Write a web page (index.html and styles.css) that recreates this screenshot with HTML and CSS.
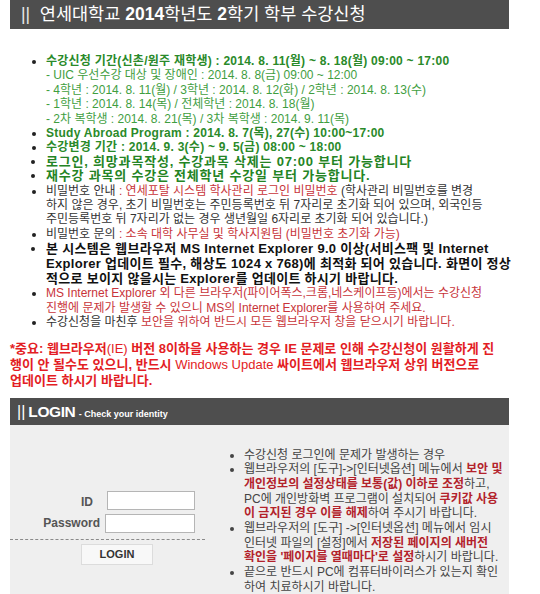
FILE: index.html
```html
<!DOCTYPE html>
<html lang="ko">
<head>
<meta charset="utf-8">
<title>연세대학교 수강신청</title>
<link rel="stylesheet" href="styles.css">
</head>
<body>
<div class="page">
  <div class="title-bar"><span class="bars">||</span> &nbsp;연세대학교 <b>2014</b>학년도 <b>2</b>학기 학부 수강신청</div>

  <ul class="notice">
    <li class="g-b">수강신청 기간(신촌/원주 재학생) : 2014. 8. 11(월) ~ 8. 18(월) 09:00 ~ 17:00
      <div class="sub">- UIC 우선수강 대상 및 장애인 : 2014. 8. 8(금) 09:00 ~ 12:00<br>- 4학년 : 2014. 8. 11(월) / 3학년 : 2014. 8. 12(화) / 2학년 : 2014. 8. 13(수)<br>- 1학년 : 2014. 8. 14(목) / 전체학년 : 2014. 8. 18(월)<br>- 2차 복학생 : 2014. 8. 21(목) / 3차 복학생 : 2014. 9. 11(목)</div>
    </li>
    <li class="g-b">Study Abroad Program : 2014. 8. 7(목), 27(수) 10:00~17:00</li>
    <li class="g-b">수강변경 기간 : 2014. 9. 3(수) ~ 9. 5(금) 08:00 ~ 18:00</li>
    <li class="g-b big">로그인, 희망과목작성, 수강과목 삭제는 07:00 부터 가능합니다</li>
    <li class="g-b big">재수강 과목의 수강은 전체학년 수강일 부터 가능합니다.</li>
    <li class="dark">비밀번호 안내 <span class="red">: 연세포탈 시스템 학사관리 로그인 비밀번호</span> (학사관리 비밀번호를 변경<br>하지 않은 경우, 초기 비밀번호는 주민등록번호 뒤 7자리로 초기화 되어 있으며, 외국인등<br>주민등록번호 뒤 7자리가 없는 경우 생년월일 6자리로 초기화 되어 있습니다.)</li>
    <li class="dark">비밀번호 문의 <span class="red">: 소속 대학 사무실 및 학사지원팀 (비밀번호 초기화 가능)</span></li>
    <li class="black-b">본 시스템은 웹브라우저 MS Internet Explorer 9.0 이상(서비스팩 및 Internet<br>Explorer 업데이트 필수, 해상도 1024 x 768)에 최적화 되어 있습니다. 화면이 정상<br>적으로 보이지 않을시는 Explorer를 업데이트 하시기 바랍니다.</li>
    <li class="red">MS Internet Explorer 외 다른 브라우저(파이어폭스,크롬,네스케이프등)에서는 수강신청<br>진행에 문제가 발생할 수 있으니 MS의 Internet Explorer를 사용하여 주세요.</li>
    <li class="dark">수강신청을 마친후 <span class="red">보안을 위하여 반드시 모든 웹브라우저 창을 닫으시기 바랍니다.</span></li>
  </ul>

  <p class="warning">*중요: 웹브라우저<span class="thin">(IE)</span> 버전 8이하을 사용하는 경우 IE 문제로 인해 수강신청이 원활하게 진<br>행이 안 될수도 있으니, 반드시 <span class="thin">Windows Update</span> 싸이트에서 웹브라우저 상위 버전으로<br>업데이트 하시기 바랍니다.</p>

  <div class="login-bar"><span class="login-bars">||</span><span class="login-title">LOGIN</span> <span class="login-sub">- Check your identity</span></div>

  <div class="login-body">
    <div class="login-form">
      <div class="form-grid">
        <label class="lbl lbl-id" for="uid">ID</label>
        <input class="field field-id" id="uid" type="text">
        <label class="lbl" for="upw">Password</label>
        <input class="field" id="upw" type="password">
      </div>
      <div class="form-sep"></div>
      <div class="btn-row"><button class="login-btn" type="button">LOGIN</button></div>
    </div>
    <ul class="help">
      <li>수강신청 로그인에 문제가 발생하는 경우</li>
      <li>웹브라우저의 [도구]-&gt;[인터넷옵션] 메뉴에서 <b class="hl">보안 및<br>개인정보의 설정상태를 보통(값) 이하로 조정</b>하고,<br>PC에 개인방화벽 프로그램이 설치되어 <b class="hl">쿠키값 사용<br>이 금지된 경우 이를 해제</b>하여 주시기 바랍니다.</li>
      <li>웹브라우저의 [도구] -&gt;[인터넷옵션] 메뉴에서 임시<br>인터넷 파일의 [설정]에서 <b class="hl">저장된 페이지의 새버전<br>확인을 '페이지를 열때마다'로 설정</b>하시기 바랍니다.</li>
      <li>끝으로 반드시 PC에 컴퓨터바이러스가 있는지 확인<br>하여 치료하시기 바랍니다.</li>
    </ul>
  </div>
</div>
</body>
</html>
```
FILE: styles.css
```css
html, body {
  margin: 0;
  padding: 0;
  background: #ffffff;
}
body {
  font-family: "Liberation Sans", "Noto Sans CJK KR", sans-serif;
  font-size: 12px;
  color: #333;
}
.page {
  width: 499px;
  margin-left: 10px;
}
.title-bar {
  background: #4e4e4e;
  color: #fff;
  height: 29px;
  line-height: 29px;
  font-size: 17.5px;
  padding-left: 11px;
  white-space: nowrap;
}
.title-bar .bars {
  font-weight: normal;
  color: #e8e8e8;
}
.title-bar b { font-weight: bold; }

.notice {
  margin: 25px 0 0 0;
  padding: 0 0 0 36px;
  list-style: disc;
  line-height: 14.4px;
  white-space: nowrap;
}
.notice li { margin: 0; }
.notice li::marker { color: #222; }
.g-b {
  color: #2a8a2a;
  font-weight: bold;
  letter-spacing: 0.25px;
}
.g-b.big {
  font-size: 13px;
  letter-spacing: 0.8px;
  color: #248424;
}
.sub {
  color: #3f9e3f;
  font-weight: normal;
  font-size: 12px;
  letter-spacing: 0;
}
.dark { color: #333; }
.red { color: #c8343a; }
.black-b {
  color: #111;
  font-weight: bold;
  font-size: 13px;
  line-height: 15px;
  letter-spacing: 0.3px;
}
.warning {
  margin: 11px 0 0 0;
  color: #e31d24;
  font-weight: bold;
  font-size: 13px;
  line-height: 16px;
  white-space: nowrap;
}
.warning .thin { font-weight: normal; }

.login-bar {
  margin-top: 9px;
  background: #4e4e4e;
  color: #fff;
  height: 27px;
  line-height: 27px;
  padding-left: 7px;
  white-space: nowrap;
}
.login-bars {
  font-size: 16px;
  margin-right: 3px;
}
.login-title {
  font-size: 15.5px;
  font-weight: bold;
  letter-spacing: -0.4px;
}
.login-sub {
  font-size: 9px;
  font-weight: bold;
}

.login-body {
  background: #efefef;
  display: flex;
  height: 180px;
}
.login-form {
  width: 195px;
  padding-top: 66px;
}
.form-grid {
  display: grid;
  grid-template-columns: 90px 90px;
  column-gap: 5px;
  row-gap: 4px;
  align-items: center;
}
.lbl {
  text-align: right;
  font-weight: bold;
  font-size: 12px;
  color: #555;
}
.lbl-id {
  padding-right: 7px;
  padding-top: 3px;
}
.field {
  width: 90px;
  height: 19px;
  box-sizing: border-box;
  border: 1px solid #b5b5b5;
  background: #fff;
  margin: 0;
  padding: 0;
}
.field-id {
  margin-left: 2px;
  width: 88px;
}
.form-sep {
  margin-top: 6px;
  border-top: 1px dashed #8a8a8a;
}
.btn-row {
  padding-top: 4px;
  padding-left: 71px;
}
.login-btn {
  width: 72px;
  height: 21px;
  background: #f8f8f8;
  border: 1px solid #dcdcdc;
  font-family: "Liberation Sans", sans-serif;
  font-size: 11px;
  font-weight: bold;
  color: #333;
  padding: 0;
}
.help {
  margin: 23px 0 0 0;
  padding: 0 0 0 39px;
  list-style: disc;
  line-height: 14.7px;
  color: #444;
  white-space: nowrap;
  font-size: 12px;
}
.help .hl {
  color: #b3222b;
  font-weight: bold;
}
```
